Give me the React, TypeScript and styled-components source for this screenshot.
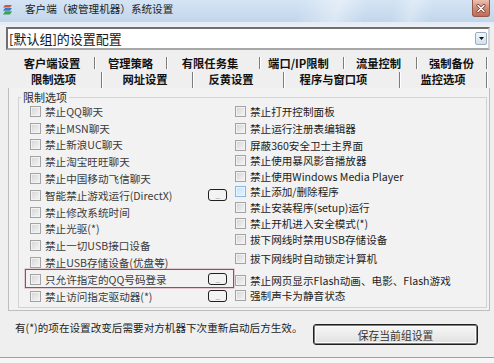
import React from 'react';
import styled, { createGlobalStyle } from 'styled-components';

const GlobalStyle = createGlobalStyle`
  html, body { margin: 0; padding: 0; }
  body {
    width: 494px;
    height: 363px;
    overflow: hidden;
    background: #efefef;
    font-family: "Noto Sans CJK SC", "Noto Sans", sans-serif;
  }
`;

const Window = styled.div`
  width: 494px;
  height: 363px;
  display: flex;
  flex-direction: column;
  background: #efefef;
  overflow: hidden;
`;

const TitleBar = styled.div`
  height: 25px;
  box-sizing: border-box;
  display: flex;
  align-items: flex-start;
  padding-left: 2px;
  border-bottom: 3px solid #e4edf7;
  background:
    linear-gradient(105deg, rgba(255,255,255,0) 60%, rgba(255,255,255,0.4) 68%, rgba(255,255,255,0) 74%, rgba(255,255,255,0) 79%, rgba(255,255,255,0.3) 83%, rgba(255,255,255,0) 87%),
    linear-gradient(180deg, #d4e4f4 0%, #c2d6eb 100%);
`;

const TitleIcon = styled.svg`
  margin-top: 4px;
  flex: none;
`;

const TitleText = styled.div`
  margin: 3px 0 0 12px;
  font-size: 10.6px;
  line-height: 12px;
  color: #1c1c1c;
  white-space: nowrap;
`;

const CloseBtn = styled.div`
  margin-left: auto;
  margin-right: 4px;
  width: 18px;
  height: 17px;
  box-sizing: border-box;
  border: 1px solid #95594c;
  border-top: none;
  border-radius: 0 0 3px 3px;
  background: linear-gradient(180deg, #ecc0b0 0%, #d48a76 50%, #c46a55 100%);
  display: flex;
  align-items: center;
  justify-content: center;
`;

const Client = styled.div`
  flex: 1;
  display: flex;
  flex-direction: column;
  padding-top: 2px;
`;

const Combo = styled.div`
  margin-left: 6px;
  width: 484px;
  height: 23px;
  box-sizing: border-box;
  border-style: solid;
  border-width: 2px;
  border-color: #6f6f6f #d4d4d4 #a8a8a8 #6f6f6f;
  background: #fff;
  display: flex;
  align-items: center;
  padding-left: 1px;
`;

const ComboText = styled.span`
  font-size: 13px;
  line-height: 16px;
  color: #151515;
  white-space: nowrap;
`;

const ComboArrow = styled.div`
  margin-left: auto;
  margin-right: 1px;
  width: 12px;
  height: 13px;
  box-sizing: border-box;
  border: 1px solid #98adc0;
  border-radius: 2px;
  background: linear-gradient(180deg, #f1f6fb 0%, #d2e0ec 100%);
  display: flex;
  align-items: center;
  justify-content: center;
`;

const TabStrip = styled.div`
  margin-top: 5px;
  display: flex;
  flex-direction: column;
`;

const TabRow = styled.div<{ $start: number; $h: number; $back?: boolean }>`
  display: flex;
  padding-left: ${p => p.$start}px;
  height: ${p => p.$h}px;
  box-sizing: border-box;
  padding-top: ${p => (p.$back ? 2 : 0)}px;
`;

const Tab = styled.div<{ $w: number; $lean?: number; $back?: boolean }>`
  width: ${p => p.$w}px;
  flex: none;
  box-sizing: border-box;
  height: ${p => (p.$back ? 12 : 16)}px;
  border-right: 1px solid #7c7c7c;
  box-shadow: 1px 0 0 #ffffff;
  padding-right: ${p => p.$lean ?? 0}px;
  padding-bottom: ${p => (p.$back ? 0 : 3)}px;
  display: flex;
  align-items: center;
  justify-content: center;
  font-size: 11.3px;
  font-weight: 700;
  line-height: 12px;
  color: #111;
  white-space: nowrap;
`;

const Panel = styled.div`
  margin-left: 8px;
  width: 482px;
  height: 223px;
  box-sizing: border-box;
  border: 1px solid #bdbdbd;
  border-top: none;
  background: #f2f2f2;
  padding: 3px 2px 2px 9px;
  display: flex;
`;

const Group = styled.fieldset`
  flex: 1;
  margin: 0;
  padding: 0;
  min-width: 0;
  border: 1px solid #d2d2d2;
`;

const Legend = styled.legend`
  margin-left: 2px;
  padding: 0 2px;
  font-size: 11px;
  line-height: 12px;
  color: #2a2a2a;
`;

const Columns = styled.div`
  display: grid;
  grid-template-columns: 197px 1fr;
  column-gap: 8px;
  padding-left: 11px;
`;

const Column = styled.div`
  display: flex;
  flex-direction: column;
`;

const Option = styled.div<{ $h: number; $mt?: number; $dark?: boolean; $marked?: boolean }>`
  position: relative;
  height: ${p => p.$h}px;
  margin-top: ${p => p.$mt ?? 0}px;
  display: flex;
  align-items: center;
  font-size: 10.6px;
  color: ${p => (p.$dark ? '#1c1c1c' : '#3a3a3a')};
  white-space: nowrap;
  ${p =>
    p.$marked &&
    `
    &::after {
      content: '';
      position: absolute;
      left: -5px;
      right: -7px;
      top: -2px;
      bottom: 0;
      border: 1px solid #b0434f;
      box-shadow: 0 0 0 0.6px rgba(176, 67, 79, 0.35);
      pointer-events: none;
    }
  `}
`;

const Box = styled.span<{ $hot?: boolean }>`
  width: 11px;
  height: 11px;
  flex: none;
  box-sizing: border-box;
  margin-right: 4px;
  border: 1px solid ${p => (p.$hot ? '#86b9e3' : '#a3a3a3')};
  background: ${p =>
    p.$hot
      ? 'linear-gradient(135deg, #c4e2f7 0%, #e6f4fd 100%)'
      : 'linear-gradient(135deg, #d4d4d4 0%, #f6f6f6 100%)'};
  box-shadow: inset 0 0 0 1px ${p => (p.$hot ? '#eaf6fe' : '#f2f2f2')};
`;

const Label = styled.span`
  flex: 1;
  min-width: 0;
  line-height: 13px;
`;

const MoreBtn = styled.span`
  width: 19px;
  height: 12px;
  flex: none;
  box-sizing: border-box;
  border: 1.5px solid #202020;
  border-radius: 3px;
  background: #f3f3f3;
  display: flex;
  align-items: flex-end;
  justify-content: center;
  font-size: 7px;
  line-height: 7px;
  color: #9a9a9a;
  letter-spacing: -0.5px;
`;

const BottomRow = styled.div`
  height: 46px;
  display: flex;
  align-items: flex-start;
  padding-left: 15px;
`;

const Note = styled.div`
  margin-top: 10px;
  font-size: 10.6px;
  line-height: 14px;
  color: #1e1e1e;
  white-space: nowrap;
`;

const SaveButton = styled.div`
  margin: 13px 16px 0 auto;
  width: 165px;
  height: 21px;
  box-sizing: border-box;
  border: 1px solid #1f1f1f;
  border-radius: 3px;
  box-shadow: inset 0 0 0 1px #7d7d7d, inset 0 0 0 2px #fbfbfb;
  background: linear-gradient(180deg, #f7f7f7 0%, #ececec 50%, #e0e0e0 100%);
  display: flex;
  align-items: center;
  justify-content: center;
  font-size: 10.8px;
  color: #333;
`;

const Footer = styled.div`
  flex: 1;
  border-top: 1px solid #9f9f9f;
  background: #f6f6f6;
`;

type Item = { label: string; more?: boolean; marked?: boolean; hot?: boolean; mt?: number };

const leftItems: Item[] = [
  { label: '禁止QQ聊天' },
  { label: '禁止MSN聊天' },
  { label: '禁止新浪UC聊天' },
  { label: '禁止淘宝旺旺聊天' },
  { label: '禁止中国移动飞信聊天' },
  { label: '智能禁止游戏运行(DirectX)', more: true },
  { label: '禁止修改系统时间' },
  { label: '禁止光驱(*)' },
  { label: '禁止一切USB接口设备' },
  { label: '禁止USB存储设备(优盘等)' },
  { label: '只允许指定的QQ号码登录', more: true, marked: true },
  { label: '禁止访问指定驱动器(*)', more: true },
];

const rightItems: Item[] = [
  { label: '禁止打开控制面板' },
  { label: '禁止运行注册表编辑器', mt: 1 },
  { label: '屏蔽360安全卫士主界面', mt: 1 },
  { label: '禁止使用暴风影音播放器', mt: -1 },
  { label: '禁止使用Windows Media Player' },
  { label: '禁止添加/删除程序', hot: true, mt: -1 },
  { label: '禁止安装程序(setup)运行' },
  { label: '禁止开机进入安全模式(*)' },
  { label: '拔下网线时禁用USB存储设备' },
  { label: '拔下网线时自动锁定计算机', mt: 3 },
  { label: '禁止网页显示Flash动画、电影、Flash游戏', mt: 6 },
  { label: '强制声卡为静音状态', mt: -1 },
];

const backTabs = [
  { label: '客户端设置', w: 85 },
  { label: '管理策略', w: 72 },
  { label: '有限任务集', w: 93, lean: 6 },
  { label: '端口/IP限制', w: 84, lean: 6 },
  { label: '流量控制', w: 73, lean: 3 },
  { label: '强制备份', w: 70 },
];

const frontTabs = [
  { label: '限制选项', w: 94, lean: 2 },
  { label: '网址设置', w: 91, lean: 4 },
  { label: '反黄设置', w: 91, lean: 14 },
  { label: '程序与窗口项', w: 116, lean: 16 },
  { label: '监控选项', w: 87 },
];

export default function App() {
  return (
    <>
      <GlobalStyle />
      <Window>
        <TitleBar>
          <TitleIcon width="11" height="11" viewBox="0 0 11 11">
            <path d="M3 1 L10 1 L8 3.5 L1 3.5 Z" fill="#d9553a" />
            <path d="M3 4 L10 4 L8 6.8 L1 6.8 Z" fill="#2f7fd0" />
            <path d="M3 7.3 L10 7.3 L8 10.5 L1 10.5 Z" fill="#3fa34a" />
          </TitleIcon>
          <TitleText>客户端（被管理机器）系统设置</TitleText>
          <CloseBtn>
            <svg width="10" height="9" viewBox="0 0 10 9">
              <path d="M2 1.5 L8 7.5 M8 1.5 L2 7.5" stroke="#6b3a30" strokeWidth="3" strokeLinecap="round" />
              <path d="M2 1.5 L8 7.5 M8 1.5 L2 7.5" stroke="#ffffff" strokeWidth="1.6" strokeLinecap="round" />
            </svg>
          </CloseBtn>
        </TitleBar>
        <Client>
          <Combo>
            <ComboText>[默认组]的设置配置</ComboText>
            <ComboArrow>
              <svg width="5" height="3" viewBox="0 0 5 3">
                <path d="M0 0 L5 0 L2.5 3 Z" fill="#111" />
              </svg>
            </ComboArrow>
          </Combo>
          <TabStrip>
            <TabRow $start={10} $h={17} $back>
              {backTabs.map(t => (
                <Tab key={t.label} $w={t.w} $lean={t.lean} $back>
                  {t.label}
                </Tab>
              ))}
            </TabRow>
            <TabRow $start={8} $h={16}>
              {frontTabs.map(t => (
                <Tab key={t.label} $w={t.w} $lean={t.lean}>
                  {t.label}
                </Tab>
              ))}
            </TabRow>
          </TabStrip>
          <Panel>
            <Group>
              <Legend>限制选项</Legend>
              <Columns>
                <Column>
                  {leftItems.map(it => (
                    <Option key={it.label} $h={16.8} $marked={it.marked}>
                      <Box />
                      <Label>{it.label}</Label>
                      {it.more && <MoreBtn>...</MoreBtn>}
                    </Option>
                  ))}
                </Column>
                <Column>
                  {rightItems.map(it => (
                    <Option key={it.label} $h={16} $mt={it.mt} $dark>
                      <Box $hot={it.hot} />
                      <Label>{it.label}</Label>
                    </Option>
                  ))}
                </Column>
              </Columns>
            </Group>
          </Panel>
          <BottomRow>
            <Note>有(*)的项在设置改变后需要对方机器下次重新启动后方生效。</Note>
            <SaveButton>保存当前组设置</SaveButton>
          </BottomRow>
          <Footer />
        </Client>
      </Window>
    </>
  );
}
